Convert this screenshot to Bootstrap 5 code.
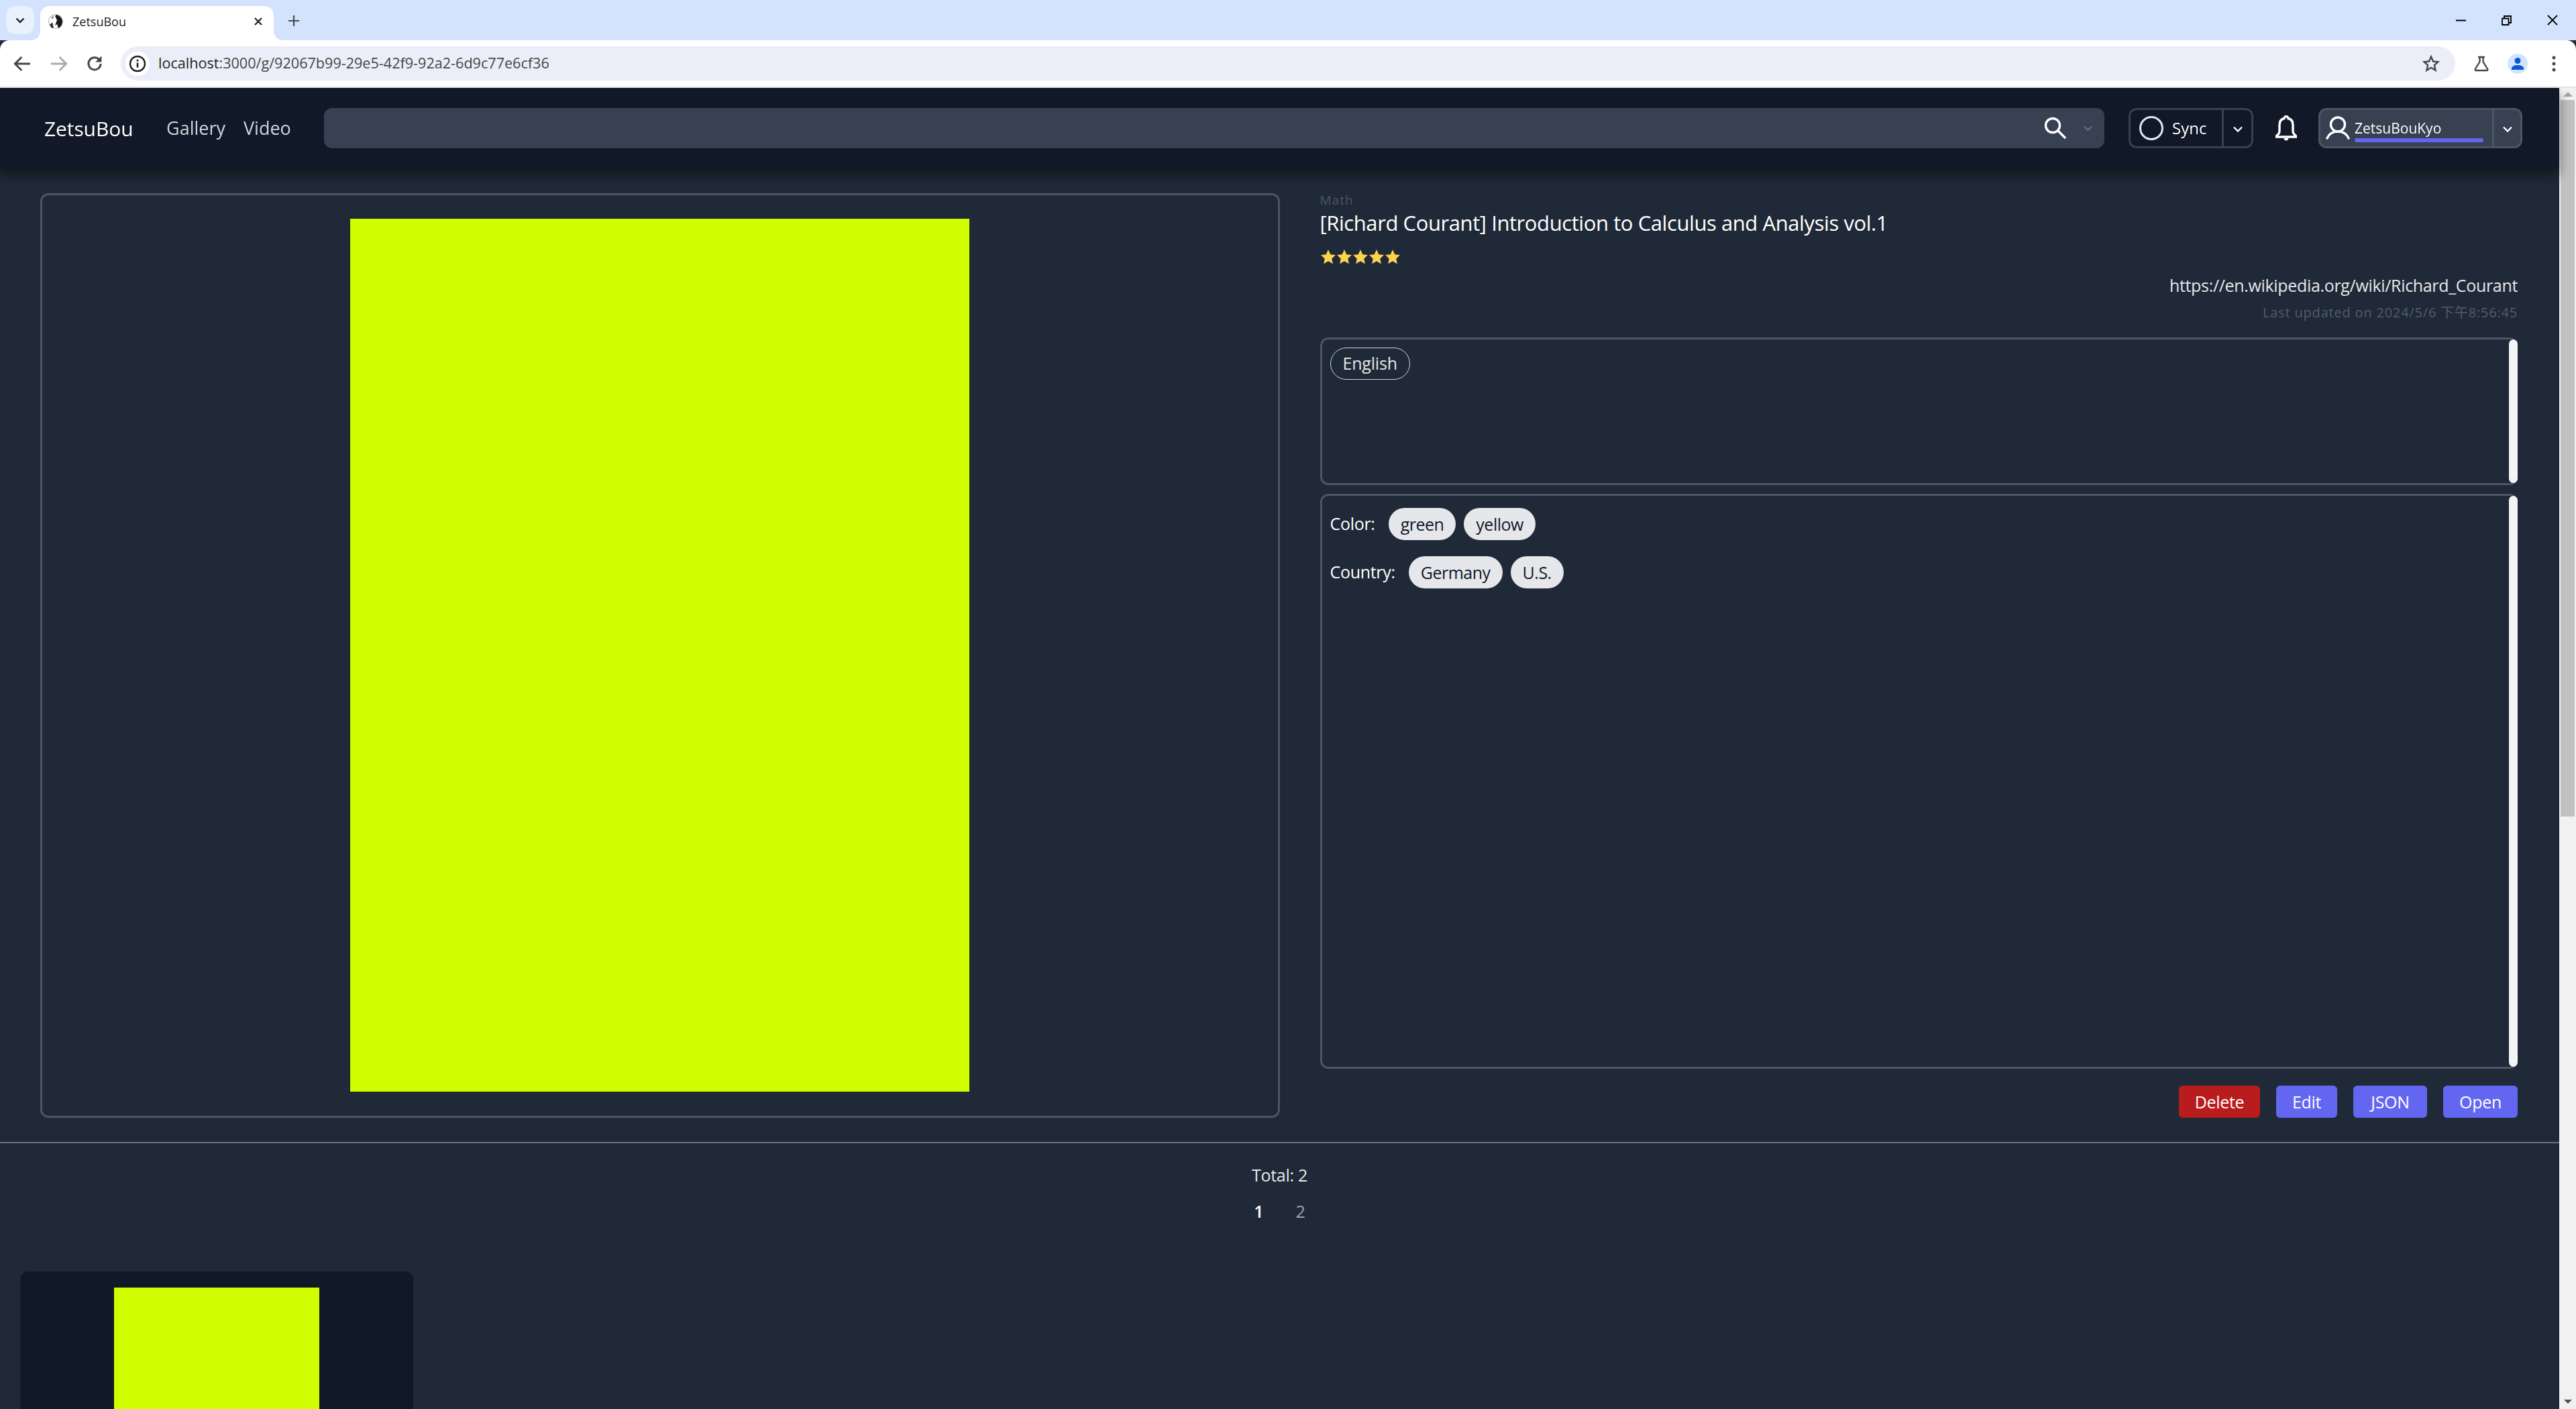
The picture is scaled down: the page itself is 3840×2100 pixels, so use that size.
<!DOCTYPE html>
<html lang="en">
<head>
    <meta charset="UTF-8">
    <title>ZetsuBou</title>
    <link href="https://cdn.jsdelivr.net/npm/bootstrap@5.3.0/dist/css/bootstrap.min.css" rel="stylesheet">
    <style>
        html, body { height: 100%; overflow: hidden; }
        body {
            background: #1f2937;
            color: #fff;
            font-family: "Open Sans", "Noto Sans CJK SC", sans-serif;
            font-size: 25px;
        }

        /* browser frame */
        .tab-strip { height: 60px; background: #d3e3fd; padding: 9px 0 0 9px; }
        .tab-menu { width: 42px; height: 42px; background: #e9f0fe; border-radius: 14px; }
        .tab-item {
            width: 348px; height: 51px; margin-left: 9px; padding: 0 16px 5px 12px;
            background: #fff; border-radius: 14px 14px 0 0; position: relative;
            font-size: 18px; color: #1f1f1f;
        }
        .tab-item::before, .tab-item::after {
            content: ""; position: absolute; bottom: 0; width: 14px; height: 14px;
        }
        .tab-item::before { left: -14px; background: radial-gradient(circle at 0 0, #d3e3fd 13.5px, #fff 14.5px); }
        .tab-item::after { right: -14px; background: radial-gradient(circle at 100% 0, #d3e3fd 13.5px, #fff 14.5px); }
        .tab-name { margin-left: 14px; font-size: 18px; }
        .tab-plus { margin-left: 22px; }
        .win-btns { gap: 53px; padding-right: 27px; margin-top: -9px; }
        .tool-bar {
            height: 71px; background: #fff; border-bottom: 2px solid #e3e3e3;
            border-radius: 14px 14px 0 0; padding: 0 0 0 19px;
        }
        .tool-nav { gap: 26.500px; margin-right: 26px; }
        .addr-bar {
            height: 51px; width: 3480px; background: #ebeef8; border-radius: 26px;
            padding: 0 23px 0 7px; color: #1f1f1f; font-size: 21.600px;
        }
        .addr-info { width: 36px; height: 36px; background: #fff; border-radius: 50%; margin-right: 13px; }
        .addr-host { color: #1f1f1f; }
        .addr-path { color: #474747; }
        .tool-right { margin-left: 27px; }
        .profile-dot { width: 30px; height: 30px; background: #d3e3fd; border-radius: 50%; margin: 0 36px 0 27px; }

        /* page */
        .page-view { height: 1969px; overflow: hidden; }
        .page-main { width: 3815px; flex: 0 0 3815px; }
        .page-scroll { width: 25px; background: #f1f1f1; padding-top: 6px; }
        .scroll-up { width: 0; height: 0; border: 7px solid transparent; border-top: 0; border-bottom: 7px solid #a3a3a3; margin: 0 auto 5px; }
        .scroll-bar { width: 21px; height: 1068px; background: #c1c1c1; margin: 0 auto; }
        .scroll-fill { flex: 1; }
        .scroll-down { width: 0; height: 0; border: 6px solid transparent; border-bottom: 0; border-top: 6px solid #505050; margin: 0 auto 8px; }

        /* navbar */
        .top-nav {
            height: 120px; padding: 0 55px 0 66px; background: #111827;
            box-shadow: 0 10px 15px rgba(0, 0, 0, .45);
            flex-wrap: nowrap; justify-content: flex-start;
        }
        .brand-link { width: 132px; color: #fff; font-size: 30px; letter-spacing: -.1px; padding: 0; margin: 0; }
        .brand-link:hover { color: #fff; }
        .nav-items { width: 187px; margin-left: 50px; flex-wrap: nowrap; }
        .nav-items .nav-item:first-child { width: 115px; }
        .nav-items .nav-link { color: #d1d5db; font-size: 27px; padding: 0; }
        .search-box {
            width: 2654px; height: 60px; margin-left: 48px; background: #374151;
            border-radius: 12px; padding-right: 18px;
        }
        .search-box .form-control { background: transparent; border: 0; box-shadow: none; color: #fff; }
        .search-icon { margin-right: 25px; }
        .sync-group {
            height: 60px; width: 186px; margin-left: 36px;
            border: 3px solid #374151; border-radius: 12px;
        }
        .sync-main, .user-main { color: #fff; border: 0; border-radius: 0; padding: 0; font-size: 24px; }
        .sync-main { width: 136px; padding-left: 13px; gap: 13px; }
        .sync-drop, .user-drop { border: 0; border-left: 3px solid #374151; border-radius: 0; padding: 0; flex: 1; }
        .bell-btn { width: 97px; padding: 0; border: 0; }
        .user-group {
            height: 60px; width: 304px; background: #374151;
            border: 3px solid #4b5563; border-radius: 12px;
        }
        .user-main { width: 256px; padding-left: 8px; gap: 7px; }
        .user-drop { border-left-color: #4b5563; }
        .user-text { width: 192px; text-align: left; }
        .user-name { font-size: 21px; line-height: 24px; margin-top: 9px; }
        .user-meter { height: 6px; background: #6366f1; border-radius: 3px; margin-top: 3px; }

        /* gallery detail */
        .detail-row { padding-top: 37px; }
        .detail-left { padding-left: 60px; }
        .detail-right { padding: 0 62px 0 60px; }
        .cover-frame {
            height: 1378px; padding-bottom: 1px; border: 3px solid #4b5563; border-radius: 12px;
            background: #1f2937;
        }
        .cover-page { width: 923px; height: 1301px; background: #d1fd00; }
        .gallery-cat { height: 20px; line-height: 20px; font-size: 19px; letter-spacing: 1px; color: #4b5563; }
        .gallery-title { height: 48px; line-height: 48px; font-size: 31px; letter-spacing: -.42px; font-weight: 400; margin: 0; color: #fff; }
        .gallery-stars { height: 22px; margin-top: 16px; line-height: 0; }
        .gallery-stars svg { display: inline-block; vertical-align: top; }
        .gallery-url { height: 36px; line-height: 36px; margin-top: 13px; text-align: right; font-size: 25px; letter-spacing: -.33px; color: #e5e7eb; }
        .gallery-date { height: 28px; line-height: 28px; margin-top: 9px; text-align: right; font-size: 20px; letter-spacing: .8px; color: #535d6b; }
        .tag-box { border: 3px solid #4b5563; border-radius: 12px; background: #1f2937; }
        .lang-box { height: 220px; margin-top: 23px; }
        .attr-box { height: 857px; margin-top: 13px; }
        .box-body { flex: 1; padding: 12px; }
        .attr-box .box-body { padding-top: 15px; }
        .box-thumb { width: 13px; margin: 0 -3px 0 0; background: #f3f4f6; border-radius: 7px; }
        .lang-pill {
            height: 48px; line-height: 45px; padding: 0 18px; font-size: 25px; letter-spacing: -.2px; color: #e5e7eb;
            border: 1.500px solid #d1d5db; border-radius: 24px; vertical-align: top;
        }
        .tag-row { height: 48px; margin-bottom: 24px; gap: 12px; font-size: 25px; letter-spacing: -.3px; color: #fff; }
        .tag-row:first-child { margin-top: 3px; }
        .tag-label { margin-right: 8px; }
        .tag-pill {
            height: 48px; line-height: 48px; padding: 0 18px; background: #e5e7eb; color: #111827;
            font-size: 25px; font-weight: 400; letter-spacing: -.5px; border-radius: 24px;
        }
        .action-row { height: 48px; margin-top: 25px; gap: 24px; }
        .act-btn {
            height: 48px; padding: 0; border: 0; border-radius: 6px; color: #fff;
            background: #6366f1; font-size: 25px; letter-spacing: -.3px; line-height: 48px;
        }
        .act-btn:hover { background: #6366f1; color: #fff; }
        .act-danger, .act-danger:hover { background: #b91c1c; width: 121px; }
        .act-edit { width: 91px; }
        .act-json { width: 110px; }
        .act-open { width: 111px; }

        .page-rule { margin: 36px 0 0; border: 0; border-top: 2px solid #6b7280; opacity: 1; }
        .total-line { height: 36px; line-height: 36px; margin-top: 29px; text-align: center; font-size: 25px; letter-spacing: -.3px; color: #e5e7eb; }
        .pager-line { height: 36px; line-height: 36px; margin-top: 18px; gap: 48px; font-size: 25px; color: #9ca3af; }
        .pager-line .pager-on { color: #fff; font-weight: 600; }
        .thumb-card {
            width: 586px; height: 800px; margin: 72px 0 0 30px; padding-top: 24px;
            background: #111827; border-radius: 12px 12px 0 0;
        }
        .thumb-page { width: 306px; height: 760px; background: #d1fd00; }
    </style>
</head>
<body>
    <!-- browser frame -->
    <div class="tab-strip d-flex">
        <div class="tab-menu d-flex align-items-center justify-content-center">
            <svg width="14" height="9" viewBox="0 0 14 9"><path d="M1.500 1.500 7 7l5.500-5.500" fill="none" stroke="#1f1f1f" stroke-width="2.400"/></svg>
        </div>
        <div class="tab-item d-flex align-items-center">
            <svg width="22" height="24" viewBox="0 0 22 24"><circle cx="11" cy="12" r="10.500" fill="#fff" stroke="#aaa" stroke-width="1"/><path d="M12 2c5 1 9 5 9 10 0 5-3 9-6 10l-2-6-3 2 3-8-3-6z" fill="#1a1a1a"/><path d="M2 17l4-4 2 8-3 1z" fill="#333"/><path d="M4 6l4-3-1 6z" fill="#888"/></svg>
            <span class="tab-name flex-grow-1">ZetsuBou</span>
            <svg width="14" height="14" viewBox="0 0 14 14"><path d="M2 2l10 10M12 2 2 12" stroke="#1f1f1f" stroke-width="2.200"/></svg>
        </div>
        <div class="tab-plus d-flex align-items-center mb-2">
            <svg width="16" height="16" viewBox="0 0 16 16"><path d="M8 0v16M0 8h16" stroke="#474747" stroke-width="2.200"/></svg>
        </div>
        <div class="win-btns d-flex align-items-center ms-auto">
            <svg width="15" height="15" viewBox="0 0 15 15"><path d="M0 7.500h15" stroke="#000" stroke-width="2"/></svg>
            <svg width="15" height="15" viewBox="0 0 15 15"><path d="M1 4.500h9.500v9.500H1zM4 4V1h10v10h-3" fill="none" stroke="#000" stroke-width="1.800"/></svg>
            <svg width="16" height="16" viewBox="0 0 16 16"><path d="M1 1l14 14M15 1 1 15" stroke="#000" stroke-width="1.800"/></svg>
        </div>
    </div>
    <div class="tool-bar d-flex align-items-center">
        <div class="tool-nav d-flex align-items-center">
            <svg width="28" height="24" viewBox="0 0 20 18"><path d="M19 9H2M9.500 1.500 2 9l7.500 7.500" fill="none" stroke="#474747" stroke-width="2.200"/></svg>
            <svg width="28" height="24" viewBox="0 0 20 18"><path d="M1 9h17M10.500 1.500 18 9l-7.500 7.500" fill="none" stroke="#ababab" stroke-width="2.200"/></svg>
            <svg width="26" height="26" viewBox="0 0 20 20"><path d="M17 10a7 7 0 1 1-2-5" fill="none" stroke="#474747" stroke-width="2.300"/><path d="M18 1v7h-7z" fill="#474747"/></svg>
        </div>
        <div class="addr-bar d-flex align-items-center">
            <div class="addr-info d-flex align-items-center justify-content-center">
                <svg width="26" height="26" viewBox="0 0 26 26"><circle cx="13" cy="13" r="11" fill="none" stroke="#1f1f1f" stroke-width="2.400"/><path d="M13 11.500v7" stroke="#1f1f1f" stroke-width="2.600"/><circle cx="13" cy="8" r="1.600" fill="#1f1f1f"/></svg>
            </div>
            <span class="addr-host">localhost</span><span class="addr-path">:3000/g/92067b99-29e5-42f9-92a2-6d9c77e6cf36</span>
            <svg class="ms-auto" width="26" height="26" viewBox="0 0 26 26"><path d="M13 2.500l3.100 7 7.400.7-5.600 5 1.700 7.500L13 18.800 6.400 22.700l1.700-7.500-5.600-5 7.400-.7z" fill="none" stroke="#474747" stroke-width="2.400"/></svg>
        </div>
        <div class="tool-right d-flex align-items-center">
            <svg width="24" height="24" viewBox="0 0 24 24"><path d="M7 2h10M9.500 2v7L2.800 20c-.5 1 .1 2 1.200 2h16c1.100 0 1.700-1 1.200-2L14.500 9V2" fill="none" stroke="#474747" stroke-width="2.400"/></svg>
            <div class="profile-dot d-flex align-items-center justify-content-center">
                <svg width="20" height="20" viewBox="0 0 20 20"><circle cx="10" cy="5.500" r="4.500" fill="#0b57d0"/><path d="M1 19v-2c0-3 4-5 9-5s9 2 9 5v2z" fill="#0b57d0"/></svg>
            </div>
            <svg width="6" height="24" viewBox="0 0 6 24"><circle cx="3" cy="3" r="2.500" fill="#474747"/><circle cx="3" cy="12" r="2.500" fill="#474747"/><circle cx="3" cy="21" r="2.500" fill="#474747"/></svg>
        </div>
    </div>

    <div class="page-view d-flex">
        <div class="page-main">
            <nav class="navbar top-nav sticky-top">
                <a class="navbar-brand brand-link" href="#">ZetsuBou</a>
                <ul class="nav nav-items">
                    <li class="nav-item"><a class="nav-link" href="#">Gallery</a></li>
                    <li class="nav-item"><a class="nav-link" href="#">Video</a></li>
                </ul>
                <div class="search-box d-flex align-items-center">
                    <input class="form-control flex-grow-1" type="text" aria-label="Search">
                    <svg class="search-icon flex-shrink-0" width="34" height="34" viewBox="0 0 34 34"><circle cx="13" cy="13" r="10.500" fill="none" stroke="#fff" stroke-width="3.400"/><path d="M21 21l11 11" stroke="#fff" stroke-width="3.400"/></svg>
                    <svg class="flex-shrink-0" width="13" height="9" viewBox="0 0 13 9"><path d="M1 1.500l5.500 5.500L12 1.500" fill="none" stroke="#6b7280" stroke-width="2"/></svg>
                </div>
                <div class="sync-group d-flex">
                    <button class="btn sync-main d-flex align-items-center" type="button">
                        <svg width="36" height="36" viewBox="0 0 36 36"><circle cx="18" cy="18" r="16.500" fill="none" stroke="#e5e7eb" stroke-width="3"/></svg>
                        <span>Sync</span>
                    </button>
                    <button class="btn sync-drop" type="button" aria-label="Sync menu">
                        <svg width="14" height="10" viewBox="0 0 14 10"><path d="M1 1.500l6 6 6-6" fill="none" stroke="#fff" stroke-width="2.400"/></svg>
                    </button>
                </div>
                <button class="btn bell-btn" type="button" aria-label="Notifications">
                    <svg width="32" height="38" viewBox="0 0 32 38"><path d="M16 1.500a3 3 0 0 1 3 3c5 1 7 5 7 10v9c0 3 2 5 4.500 7v1.500h-29V30.500C4 28.500 6 26.500 6 23.500v-9c0-5 2-9 7-10a3 3 0 0 1 3-3z" fill="none" stroke="#fff" stroke-width="3.400"/><path d="M12.500 34h7c0 2-1.500 3.500-3.500 3.500s-3.500-1.500-3.500-3.500z" fill="#fff"/></svg>
                </button>
                <div class="user-group d-flex">
                    <button class="btn user-main d-flex align-items-center" type="button">
                        <svg width="36" height="36" viewBox="0 0 36 36"><circle cx="18" cy="12.500" r="10.500" fill="none" stroke="#fff" stroke-width="3.400"/><path d="M2 33c3-7 9-10 16-10s13 3 16 10" fill="none" stroke="#fff" stroke-width="3.400" stroke-linecap="round"/></svg>
                        <span class="user-text">
                            <span class="user-name d-block">ZetsuBouKyo</span>
                            <span class="user-meter d-block"></span>
                        </span>
                    </button>
                    <button class="btn user-drop" type="button" aria-label="User menu">
                        <svg width="14" height="10" viewBox="0 0 14 10"><path d="M1 1.500l6 6 6-6" fill="none" stroke="#fff" stroke-width="2.400"/></svg>
                    </button>
                </div>
            </nav>

            <div class="row g-0 detail-row">
                <div class="col-6 detail-left">
                    <div class="cover-frame d-flex align-items-center justify-content-center">
                        <div class="cover-page"></div>
                    </div>
                </div>
                <div class="col-6 detail-right">
                    <div class="gallery-cat">Math</div>
                    <h1 class="gallery-title">[Richard Courant] Introduction to Calculus and Analysis vol.1</h1>
                    <div class="gallery-stars" id="stars"></div>
                    <div class="gallery-url">https://en.wikipedia.org/wiki/Richard_Courant</div>
                    <div class="gallery-date">Last updated on 2024/5/6 下午8:56:45</div>
                    <div class="tag-box lang-box d-flex">
                        <div class="box-body"><span class="lang-pill d-inline-block">English</span></div>
                        <div class="box-thumb"></div>
                    </div>
                    <div class="tag-box attr-box d-flex">
                        <div class="box-body">
                            <div class="tag-row d-flex align-items-center">
                                <span class="tag-label">Color:</span>
                                <span class="badge rounded-pill tag-pill">green</span>
                                <span class="badge rounded-pill tag-pill">yellow</span>
                            </div>
                            <div class="tag-row d-flex align-items-center">
                                <span class="tag-label">Country:</span>
                                <span class="badge rounded-pill tag-pill">Germany</span>
                                <span class="badge rounded-pill tag-pill">U.S.</span>
                            </div>
                        </div>
                        <div class="box-thumb"></div>
                    </div>
                    <div class="action-row d-flex justify-content-end">
                        <button class="btn act-btn act-danger" type="button">Delete</button>
                        <button class="btn act-btn act-edit" type="button">Edit</button>
                        <button class="btn act-btn act-json" type="button">JSON</button>
                        <button class="btn act-btn act-open" type="button">Open</button>
                    </div>
                </div>
            </div>

            <hr class="page-rule">
            <div class="total-line">Total: 2</div>
            <div class="pager-line d-flex justify-content-center">
                <span class="pager-on">1</span>
                <span>2</span>
            </div>
            <div class="thumb-card d-flex justify-content-center">
                <div class="thumb-page"></div>
            </div>
        </div>
        <div class="page-scroll d-flex flex-column">
            <div class="scroll-up"></div>
            <div class="scroll-bar"></div>
            <div class="scroll-fill"></div>
            <div class="scroll-down"></div>
        </div>
    </div>

    <script src="https://cdn.jsdelivr.net/npm/bootstrap@5.3.0/dist/js/bootstrap.bundle.min.js"></script>
    <script>
        // five star rating
        const starSvg = '<svg width="24" height="22" viewBox="0 0 24 22"><path d="M12 0l3.300 7.200 7.700.9-5.700 5.300 1.500 7.800L12 17.300 5.200 21.200l1.500-7.800L1 8.100l7.700-.9z" fill="#fcd34d"/></svg>';
        document.getElementById('stars').innerHTML = starSvg.repeat(5);
    </script>
</body>
</html>
